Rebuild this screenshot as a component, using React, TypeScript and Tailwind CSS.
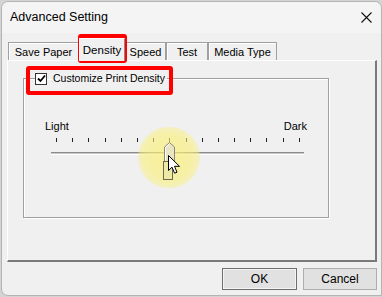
import React from "react";

const font = { fontFamily: '"Liberation Sans", Arial, sans-serif' };

function Tab({ label, w, selected }: { label: string; w: number; selected?: boolean }) {
  if (selected) {
    return (
      <div
        className="relative z-10 -mb-[1px] flex h-[23px] items-start justify-center border-l border-r border-t border-l-white border-r-[#8a8a8a] border-t-white bg-[#f0f0f0] pt-[3px] text-[11.5px] text-black"
        style={{ width: w }}
      >
        {label}
      </div>
    );
  }
  return (
    <div
      className="flex h-[18px] items-center justify-center border-l border-r border-t border-[#a0a0a0] bg-[#f0f0f0] pt-[1px] text-[11px] text-black shadow-[inset_1px_1px_0_#ffffff]"
      style={{ width: w }}
    >
      {label}
    </div>
  );
}

export default function App() {
  const ticks = Array.from({ length: 16 }, (_, i) => i);
  return (
    <div className="relative h-[297px] w-[382px] overflow-hidden bg-[#d4d4d4]" style={font}>
      <div className="ml-[1px] mt-[1px] flex h-[295px] w-[381px] flex-col rounded-t-[7px] rounded-bl-[7px] border border-[#b4b4b4] bg-[#f0f0f0]">
        {/* Title bar */}
        <div className="flex h-[31px] items-center justify-between rounded-t-[7px] bg-[#f4f4f4] pl-[8px] pr-[9px]">
          <span className="text-[12.5px] text-black">Advanced Setting</span>
          <svg width="11" height="11" viewBox="0 0 11 11">
            <path d="M0.5 0.5 L10.5 10.5 M10.5 0.5 L0.5 10.5" stroke="#111" strokeWidth="1.1" />
          </svg>
        </div>

        {/* Tabs + panel */}
        <div className="ml-[5px] mr-[4px] mt-[5px] flex flex-col">
          <div className="flex items-end pl-[1px]">
            <Tab label="Save Paper" w={71} />
            <Tab label="Density" w={46} selected />
            <Tab label="Speed" w={41} />
            <Tab label="Test" w={42} />
            <Tab label="Media Type" w={69} />
          </div>
          <div className="h-[202px] border-b-2 border-l border-r-2 border-t border-b-[#7a7a7a] border-l-white border-r-[#7a7a7a] border-t-white pl-[15px] pt-[10px]">
            <fieldset className="h-[147px] w-[306px] border border-[#a0a0a0] shadow-[1px_1px_0_#ffffff,inset_1px_1px_0_#ffffff]">
              <legend className="ml-[11px] flex items-center gap-[6px] pr-[2px] text-[10.5px] text-black">
                <span className="flex h-[12px] w-[12px] items-center justify-center border border-[#333] bg-white">
                  <svg width="9" height="9" viewBox="0 0 9 9">
                    <path d="M1 4.5 L3.5 7 L8 1.5" stroke="#000" strokeWidth="1.8" fill="none" />
                  </svg>
                </span>
                <span>Customize Print Density</span>
              </legend>
              <div className="relative ml-[21px] mt-[32px] w-[262px]">
                <div className="flex h-[14px] items-center justify-between text-[11px] text-black">
                  <span>Light</span>
                  <span>Dark</span>
                </div>
                <div className="mt-[5px] flex h-[4px] justify-between pl-[11px] pr-[7px]">
                  {ticks.map((t) => (
                    <div key={t} className="h-[4px] w-[1px] bg-[#222]" />
                  ))}
                </div>
                <div className="ml-[6px] mt-[10px] h-[3px] w-[253px] border-b border-t border-b-white border-t-[#8c8c8c] bg-[#c8c8c8]" />
              </div>
            </fieldset>
          </div>
        </div>

        {/* Buttons */}
        <div className="mr-[4px] mt-[6px] flex justify-end gap-[6px]">
          <button className="h-[22px] w-[75px] border border-[#6e6e6e] bg-[#e1e1e1] text-[12px] text-black shadow-[inset_0_0_0_1px_#f4f4f4]">
            OK
          </button>
          <button className="h-[22px] w-[74px] border border-[#adadad] bg-[#e1e1e1] text-[12px] text-black">
            Cancel
          </button>
        </div>
      </div>

      {/* Annotation: red boxes */}
      <div className="pointer-events-none absolute left-[78px] top-[34px] h-[29px] w-[49px] rounded-[3px] border-[4px] border-[#ff0000]" />
      <div className="pointer-events-none absolute left-[26px] top-[66px] h-[29px] w-[147px] rounded-[3px] border-[4px] border-[#ff0000]" />

      {/* Cursor highlight */}
      <div
        className="pointer-events-none absolute left-[138px] top-[127px] h-[61px] w-[62px] rounded-full"
        style={{
          background:
            "radial-gradient(circle, rgba(250,240,120,0.75) 0%, rgba(250,240,120,0.6) 55%, rgba(250,240,120,0.2) 85%, rgba(250,240,120,0) 100%)",
        }}
      />
      {/* Slider thumb */}
      <svg className="pointer-events-none absolute left-[164px] top-[142px]" width="11" height="20" viewBox="0 0 11 20">
        <path d="M0.5 19.5 L0.5 5 L5.5 0.5 L10.5 5 L10.5 19.5 Z" fill="#e8e4c4" stroke="#8a8a7a" strokeWidth="1" />
        <path d="M1.5 18.5 L1.5 5.5 L5.5 1.8" fill="none" stroke="#ffffff" strokeWidth="1" />
      </svg>
      {/* Drag box */}
      <div className="pointer-events-none absolute left-[163px] top-[161px] h-[19px] w-[10px] border border-[#6b6b50] bg-[#efe9a8]" />
      {/* Cursor arrow */}
      <svg className="pointer-events-none absolute left-[168px] top-[155px]" width="13" height="20" viewBox="0 0 13 20">
        <path d="M0.5 0.5 L0.5 15.5 L4 12.2 L6.6 18.2 L9 17.2 L6.5 11.3 L11.5 11.3 Z" fill="#ffffff" stroke="#000" strokeWidth="1" strokeLinejoin="round" />
      </svg>
    </div>
  );
}
